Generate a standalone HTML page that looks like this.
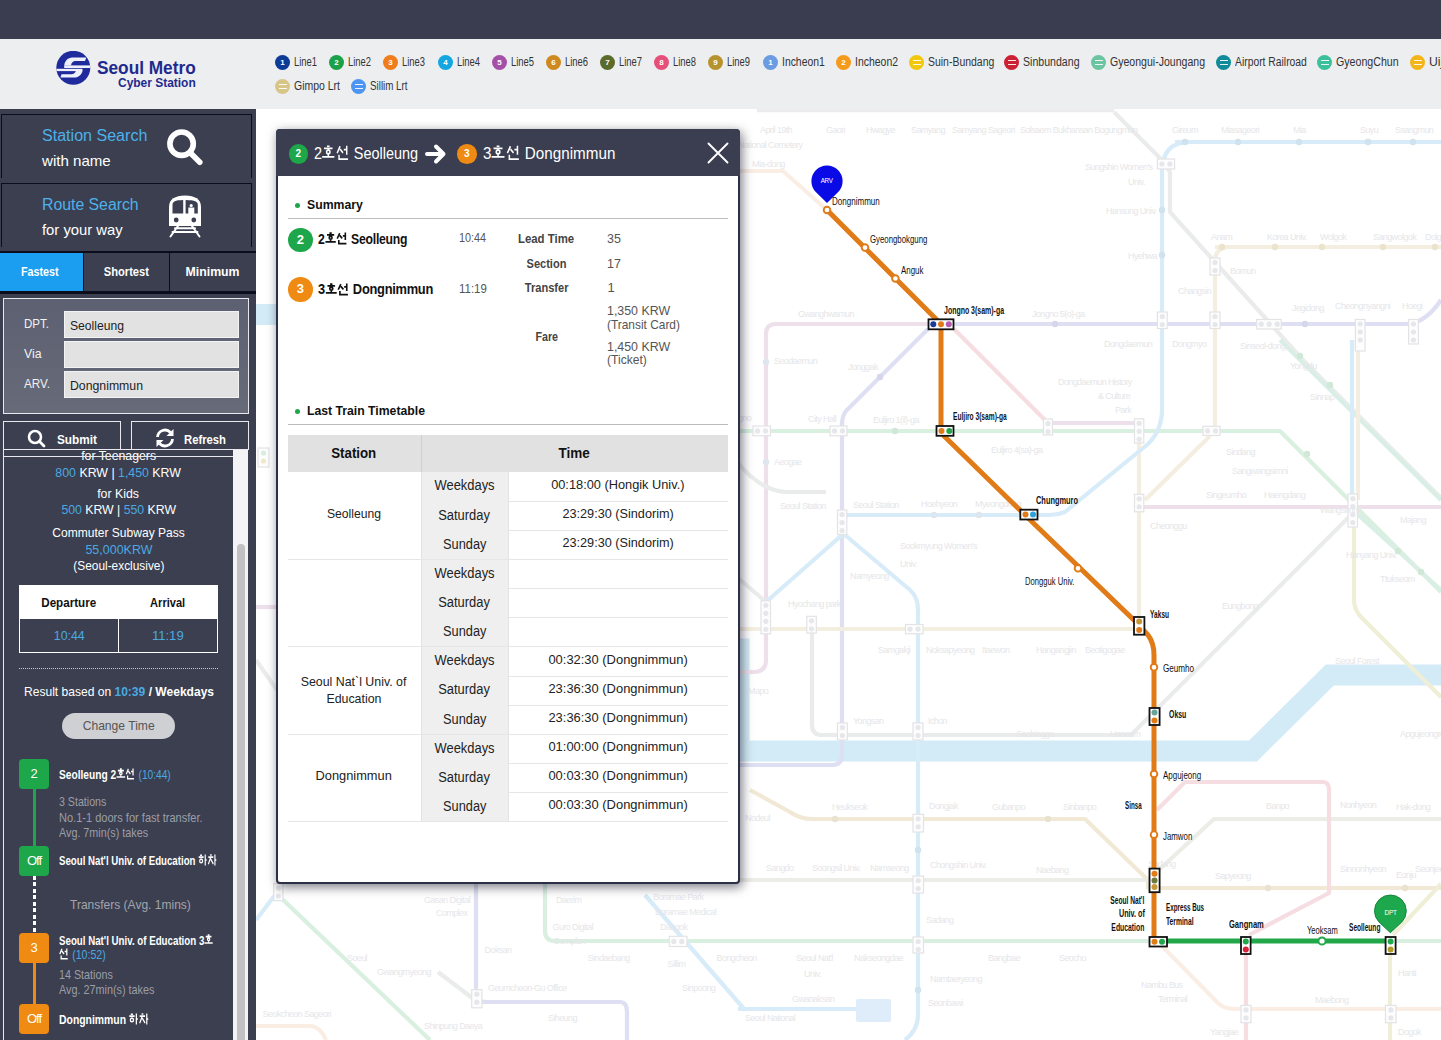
<!DOCTYPE html>
<html><head><meta charset="utf-8"><style>*{margin:0;padding:0;box-sizing:border-box}
html,body{width:1441px;height:1040px;overflow:hidden;background:#fff;font-family:"Liberation Sans",sans-serif}
.a{position:absolute}
.t{position:absolute;white-space:nowrap;line-height:1}
.kg{display:inline-block;width:0.92em;height:0.92em;vertical-align:-0.08em;margin-right:0.04em;fill:none;stroke:currentColor;overflow:visible}
.li{position:absolute;height:15px}
.li i{position:absolute;left:0;top:0;width:15px;height:15px;border-radius:50%;color:#fff;font-style:normal;font-size:8px;line-height:15px;text-align:center;font-weight:bold}
.box{position:absolute;border:1px solid #0b0d1c;border-bottom:none}
.inp{position:absolute;left:64px;width:175px;height:27px;background:#e2e2e2;border:1px solid #f4f4f4}
.bd{position:absolute;left:19px;width:30px;height:30px;border-radius:4px;color:#fff;font-size:13px;text-align:center;line-height:30px}
</style></head><body>
<div class="a" style="left:0;top:0;width:1441px;height:39px;background:#393d4f"></div><div class="a" style="left:0;top:39px;width:1441px;height:70px;background:#edeef0"></div><svg class="a" style="left:56px;top:51px" width="35" height="34" viewBox="0 0 35 34">
<defs><clipPath id="lc"><circle cx="17.3" cy="16.8" r="17"/></clipPath></defs>
<circle cx="17.3" cy="16.8" r="17" fill="#1f2b9c"/>
<g clip-path="url(#lc)" fill="#eef0fb">
<path d="M30.3,6.6L16.2,6.6C12,6.6 8.8,10.2 8.2,14.4L15,14.4C15.4,11.8 17,10 19.5,10L29,10Z"/>
<rect x="8.2" y="14.4" width="27" height="2.6"/>
<rect x="0" y="17.8" width="26.5" height="2.3"/>
<path d="M4.5,26.5L18.5,26.5C22.7,26.5 25.9,23 26.5,19.9L19.8,19.9C19.3,21.6 17.8,23.2 15.4,23.2L5.5,23.2Z"/>
</g></svg><div class="t" style="top:58.56px;font-size:18px;color:#1f2a8e;font-weight:bold;left:97.00px;transform:scaleX(0.958);transform-origin:0 0;">Seoul Metro</div>
<div class="t" style="top:76.54px;font-size:12px;color:#1f2a8e;font-weight:bold;left:117.50px;transform:scaleX(0.996);transform-origin:0 0;">Cyber Station</div>
<div class="li" style="left:275px;top:55px"><i style="background:#0e3b97">1</i></div><div class="t" style="top:56.22px;font-size:12.5px;color:#333;left:294.00px;transform:scaleX(0.752);transform-origin:0 0;">Line1</div>
<div class="li" style="left:329px;top:55px"><i style="background:#1aa14a">2</i></div><div class="t" style="top:56.22px;font-size:12.5px;color:#333;left:348.00px;transform:scaleX(0.752);transform-origin:0 0;">Line2</div>
<div class="li" style="left:383px;top:55px"><i style="background:#f07d1a">3</i></div><div class="t" style="top:56.22px;font-size:12.5px;color:#333;left:402.00px;transform:scaleX(0.752);transform-origin:0 0;">Line3</div>
<div class="li" style="left:438px;top:55px"><i style="background:#13a6e0">4</i></div><div class="t" style="top:56.22px;font-size:12.5px;color:#333;left:457.00px;transform:scaleX(0.752);transform-origin:0 0;">Line4</div>
<div class="li" style="left:492px;top:55px"><i style="background:#a550a7">5</i></div><div class="t" style="top:56.22px;font-size:12.5px;color:#333;left:511.00px;transform:scaleX(0.752);transform-origin:0 0;">Line5</div>
<div class="li" style="left:546px;top:55px"><i style="background:#cf8a1f">6</i></div><div class="t" style="top:56.22px;font-size:12.5px;color:#333;left:565.00px;transform:scaleX(0.752);transform-origin:0 0;">Line6</div>
<div class="li" style="left:600px;top:55px"><i style="background:#5b6b2c">7</i></div><div class="t" style="top:56.22px;font-size:12.5px;color:#333;left:619.00px;transform:scaleX(0.752);transform-origin:0 0;">Line7</div>
<div class="li" style="left:654px;top:55px"><i style="background:#e5507a">8</i></div><div class="t" style="top:56.22px;font-size:12.5px;color:#333;left:673.00px;transform:scaleX(0.752);transform-origin:0 0;">Line8</div>
<div class="li" style="left:708px;top:55px"><i style="background:#b6932f">9</i></div><div class="t" style="top:56.22px;font-size:12.5px;color:#333;left:727.00px;transform:scaleX(0.752);transform-origin:0 0;">Line9</div>
<div class="li" style="left:763px;top:55px"><i style="background:#6b9be0">1</i></div><div class="t" style="top:56.22px;font-size:12.5px;color:#333;left:782.00px;transform:scaleX(0.832);transform-origin:0 0;">Incheon1</div>
<div class="li" style="left:836px;top:55px"><i style="background:#f59a1b">2</i></div><div class="t" style="top:56.22px;font-size:12.5px;color:#333;left:855.00px;transform:scaleX(0.836);transform-origin:0 0;">Incheon2</div>
<div class="li" style="left:909px;top:55px"><i style="background:#f2c80f"><span style="display:inline-block;width:8px;height:5px;margin-top:5px;border-top:1.5px solid #fff;border-bottom:1.5px solid #fff;opacity:.9"></span></i></div><div class="t" style="top:56.22px;font-size:12.5px;color:#333;left:928.00px;transform:scaleX(0.837);transform-origin:0 0;">Suin-Bundang</div>
<div class="li" style="left:1004px;top:55px"><i style="background:#cc2035"><span style="display:inline-block;width:8px;height:5px;margin-top:5px;border-top:1.5px solid #fff;border-bottom:1.5px solid #fff;opacity:.9"></span></i></div><div class="t" style="top:56.22px;font-size:12.5px;color:#333;left:1023.00px;transform:scaleX(0.847);transform-origin:0 0;">Sinbundang</div>
<div class="li" style="left:1091px;top:55px"><i style="background:#6cc4a0"><span style="display:inline-block;width:8px;height:5px;margin-top:5px;border-top:1.5px solid #fff;border-bottom:1.5px solid #fff;opacity:.9"></span></i></div><div class="t" style="top:56.22px;font-size:12.5px;color:#333;left:1110.00px;transform:scaleX(0.844);transform-origin:0 0;">Gyeongui-Joungang</div>
<div class="li" style="left:1216px;top:55px"><i style="background:#118a9a"><span style="display:inline-block;width:8px;height:5px;margin-top:5px;border-top:1.5px solid #fff;border-bottom:1.5px solid #fff;opacity:.9"></span></i></div><div class="t" style="top:56.22px;font-size:12.5px;color:#333;left:1235.00px;transform:scaleX(0.827);transform-origin:0 0;">Airport Railroad</div>
<div class="li" style="left:1317px;top:55px"><i style="background:#3cc09c"><span style="display:inline-block;width:8px;height:5px;margin-top:5px;border-top:1.5px solid #fff;border-bottom:1.5px solid #fff;opacity:.9"></span></i></div><div class="t" style="top:56.22px;font-size:12.5px;color:#333;left:1336.00px;transform:scaleX(0.851);transform-origin:0 0;">GyeongChun</div>
<div class="li" style="left:1410px;top:55px"><i style="background:#f2b51c"><span style="display:inline-block;width:8px;height:5px;margin-top:5px;border-top:1.5px solid #fff;border-bottom:1.5px solid #fff;opacity:.9"></span></i></div><div class="t" style="top:56.22px;font-size:12.5px;color:#333;left:1429.00px;transform:scaleX(0.977);transform-origin:0 0;">Uijeongbu</div>
<div class="li" style="left:275px;top:79px"><i style="background:#d8c588"><span style="display:inline-block;width:8px;height:5px;margin-top:5px;border-top:1.5px solid #fff;border-bottom:1.5px solid #fff;opacity:.9"></span></i></div><div class="t" style="top:80.22px;font-size:12.5px;color:#333;left:294.00px;transform:scaleX(0.838);transform-origin:0 0;">Gimpo Lrt</div>
<div class="li" style="left:351px;top:79px"><i style="background:#4d95f0"><span style="display:inline-block;width:8px;height:5px;margin-top:5px;border-top:1.5px solid #fff;border-bottom:1.5px solid #fff;opacity:.9"></span></i></div><div class="t" style="top:80.22px;font-size:12.5px;color:#333;left:370.00px;transform:scaleX(0.783);transform-origin:0 0;">Sillim Lrt</div>
<div class="a" style="left:256px;top:109px;width:1185px;height:931px;background:#fff"></div><svg class="a" style="left:256px;top:109px" width="1185" height="931" viewBox="256 109 1185 931"><path d="M757,110.5H1114" stroke="#ececef" stroke-width="3.5" fill="none" stroke-linejoin="round"/><path d="M256,304H278V325H256Z" fill="#d3ebf6"/><path d="M739,638.5H749.6V740.6H1249L1325.8,664.4H1441V685.6H1333.8L1257,761.4H739Z" fill="#d3ebf6"/><path d="M738,171H783L827,210" stroke="#faeee4" stroke-width="4.2" fill="none" stroke-linejoin="round"/><path d="M1441,300Q1425,324 1405,324H954" stroke="#dedff2" stroke-width="4.2" fill="none" stroke-linejoin="round"/><path d="M928,324H776Q766,324 766,334V660Q766,672 754,672H739" stroke="#eee0ea" stroke-width="4.2" fill="none" stroke-linejoin="round"/><path d="M928,329L846,411Q842,416 842,425V755Q842,765 832,765H739" stroke="#dedff2" stroke-width="4.2" fill="none" stroke-linejoin="round"/><path d="M954,329L1045,420" stroke="#f5dde1" stroke-width="4.2" fill="none" stroke-linejoin="round"/><path d="M1048,423H1139" stroke="#eee0ea" stroke-width="4.2" fill="none" stroke-linejoin="round"/><path d="M1139,443V625" stroke="#f4eee0" stroke-width="4.2" fill="none" stroke-linejoin="round"/><path d="M1139,507H1441" stroke="#eee0ea" stroke-width="4.2" fill="none" stroke-linejoin="round"/><path d="M738,431H1280L1352,503L1441,592" stroke="#d9f0e1" stroke-width="4.2" fill="none" stroke-linejoin="round"/><path d="M1175,142H1441" stroke="#d7ecf8" stroke-width="4.2" fill="none" stroke-linejoin="round"/><path d="M1162,410V172Q1162,142 1190,142" stroke="#d7ecf8" stroke-width="4.2" fill="none" stroke-linejoin="round"/><path d="M1162,410Q1162,430 1148,444L1065,512Q1058,515 1050,515H842" stroke="#d7ecf8" stroke-width="4.2" fill="none" stroke-linejoin="round"/><path d="M845,535L910,590Q918,597 918,610V1015Q918,1030 905,1040" stroke="#d7ecf8" stroke-width="4.2" fill="none" stroke-linejoin="round"/><path d="M1215,247H1441" stroke="#f4eee0" stroke-width="4.2" fill="none" stroke-linejoin="round"/><path d="M1215,436V262Q1215,247 1230,247" stroke="#f4eee0" stroke-width="4.2" fill="none" stroke-linejoin="round"/><path d="M1210,436L1145,500" stroke="#f4eee0" stroke-width="4.2" fill="none" stroke-linejoin="round"/><path d="M738,629H1137" stroke="#f4eee0" stroke-width="4.2" fill="none" stroke-linejoin="round"/><path d="M1114,112L1162,160L1170,172V212L1303,360L1441,498" stroke="#eaeceb" stroke-width="4.2" fill="none" stroke-linejoin="round"/><path d="M812,620V725Q812,735 822,735H1131L1352,514" stroke="#eaeceb" stroke-width="4.2" fill="none" stroke-linejoin="round"/><path d="M1280,340L1441,500" stroke="#d9efe6" stroke-width="4.2" fill="none" stroke-linejoin="round"/><path d="M738,463Q762,492 788,492H826" stroke="#eaeceb" stroke-width="4.2" fill="none" stroke-linejoin="round"/><path d="M842,535L766,602" stroke="#d7ecf8" stroke-width="4.2" fill="none" stroke-linejoin="round"/><path d="M766,602L738,578" stroke="#eaeceb" stroke-width="4.2" fill="none" stroke-linejoin="round"/><path d="M1355,512L1441,590" stroke="#d9efe6" stroke-width="4.2" fill="none" stroke-linejoin="round"/><path d="M1352,340V500" stroke="#d7ecf8" stroke-width="4.2" fill="none" stroke-linejoin="round"/><path d="M1358,340V500" stroke="#f4eee0" stroke-width="4.2" fill="none" stroke-linejoin="round"/><path d="M1354,500V600Q1354,610 1362,618L1441,697" stroke="#efeed6" stroke-width="4.2" fill="none" stroke-linejoin="round"/><path d="M750,790L790,812Q800,819 812,819H1085L1148,880V888H1441" stroke="#f1e9d5" stroke-width="4.2" fill="none" stroke-linejoin="round"/><path d="M738,880H1148L1214,819H1441" stroke="#ecede6" stroke-width="4.2" fill="none" stroke-linejoin="round"/><path d="M738,941H1158" stroke="#d9f0e1" stroke-width="4.2" fill="none" stroke-linejoin="round"/><path d="M1395,941H1441" stroke="#d9f0e1" stroke-width="4.2" fill="none" stroke-linejoin="round"/><path d="M1157,810L1185,782H1323Q1329,782 1329,790V893L1249,935" stroke="#f5dde1" stroke-width="4.2" fill="none" stroke-linejoin="round"/><path d="M1246,954V1040" stroke="#f5dde1" stroke-width="4.2" fill="none" stroke-linejoin="round"/><path d="M1162,946L1215,1000Q1222,1009 1235,1009H1441" stroke="#faeee4" stroke-width="4.2" fill="none" stroke-linejoin="round"/><path d="M1390,954V1040" stroke="#efeed6" stroke-width="4.2" fill="none" stroke-linejoin="round"/><path d="M1393,935L1441,884" stroke="#efeed6" stroke-width="4.2" fill="none" stroke-linejoin="round"/><path d="M738,1009H858" stroke="#d7ecf8" stroke-width="4.2" fill="none" stroke-linejoin="round"/><rect x="856" y="999" width="35" height="23" rx="2" fill="#dfedfa"/><path d="M476,883V995Q476,1002 486,1002H620Q627,1002 627,1012V1040" stroke="#dedff2" stroke-width="4.2" fill="none" stroke-linejoin="round"/><path d="M278,895L430,1040" stroke="#d9f0e1" stroke-width="4.2" fill="none" stroke-linejoin="round"/><path d="M545,883V931Q545,941 555,941H738" stroke="#d9f0e1" stroke-width="4.2" fill="none" stroke-linejoin="round"/><path d="M645,895L745,1010" stroke="#d7ecf8" stroke-width="4.2" fill="none" stroke-linejoin="round"/><path d="M438,972L475,1000" stroke="#eaeceb" stroke-width="4.2" fill="none" stroke-linejoin="round"/><path d="M256,1026H310Q320,1026 326,1040" stroke="#faeee4" stroke-width="4.2" fill="none" stroke-linejoin="round"/><path d="M256,920L275,895" stroke="#d7ecf8" stroke-width="4.2" fill="none" stroke-linejoin="round"/><path d="M256,660L277,690" stroke="#eaeceb" stroke-width="4.2" fill="none" stroke-linejoin="round"/><path d="M256,607H277" stroke="#eee0ea" stroke-width="4.2" fill="none" stroke-linejoin="round"/><rect x="258" y="448" width="11" height="19" fill="#fdfdfd" stroke="#e3e3e6" stroke-width="1.2"/><circle cx="263.5" cy="453" r="2.6" fill="#d5eede"/><circle cx="263.5" cy="461" r="2.6" fill="#efe9c9"/><circle cx="1185" cy="142" r="3.2" fill="#cfe2ee"/><circle cx="1238" cy="142" r="3.2" fill="#cfe2ee"/><circle cx="1299" cy="142" r="3.2" fill="#cfe2ee"/><circle cx="1368" cy="142" r="3.2" fill="#cfe2ee"/><circle cx="1413" cy="142" r="3.2" fill="#cfe2ee"/><circle cx="1162" cy="210" r="3.2" fill="#cfe2ee"/><circle cx="1162" cy="255" r="3.2" fill="#cfe2ee"/><circle cx="918" cy="850" r="3.2" fill="#cfe2ee"/><circle cx="918" cy="990" r="3.2" fill="#cfe2ee"/><circle cx="1222" cy="247" r="3.2" fill="#ece3cd"/><circle cx="1275" cy="247" r="3.2" fill="#ece3cd"/><circle cx="1322" cy="247" r="3.2" fill="#ece3cd"/><circle cx="1383" cy="247" r="3.2" fill="#ece3cd"/><circle cx="1435" cy="247" r="3.2" fill="#ece3cd"/><circle cx="1055" cy="324" r="3.2" fill="#d6d6ea"/><circle cx="1305" cy="324" r="3.2" fill="#d6d6ea"/><circle cx="880" cy="377" r="3.2" fill="#d6d6ea"/><circle cx="895" cy="431" r="3.2" fill="#cfe8d8"/><circle cx="1300" cy="356" r="3.2" fill="#cfe8d8"/><circle cx="1330" cy="385" r="3.2" fill="#cfe8d8"/><circle cx="1307" cy="454" r="3.2" fill="#cfe8d8"/><circle cx="1398" cy="551" r="3.2" fill="#cfe8d8"/><circle cx="1421" cy="572" r="3.2" fill="#cfe8d8"/><circle cx="934" cy="515" r="3.2" fill="#dde6ee"/><circle cx="979" cy="515" r="3.2" fill="#dde6ee"/><circle cx="766" cy="362" r="3.2" fill="#dde6ee"/><circle cx="766" cy="462" r="3.2" fill="#dde6ee"/><circle cx="1268" cy="888" r="3.2" fill="#e8e2cf"/><circle cx="1405" cy="888" r="3.2" fill="#e8e2cf"/><circle cx="835" cy="819" r="3.2" fill="#e8e2cf"/><circle cx="1048" cy="819" r="3.2" fill="#e8e2cf"/><rect x="753" y="426" width="17.5" height="9.8" fill="#fdfdfd" stroke="#e3e3e6" stroke-width="1.2"/><circle cx="757.5" cy="430.9" r="2.6" fill="#e6e7ea"/><circle cx="765.5" cy="430.9" r="2.6" fill="#e6e7ea"/><rect x="830" y="426" width="17.0" height="9.8" fill="#fdfdfd" stroke="#e3e3e6" stroke-width="1.2"/><circle cx="834.5" cy="430.9" r="2.6" fill="#e6e7ea"/><circle cx="842.5" cy="430.9" r="2.6" fill="#e6e7ea"/><rect x="1043.5" y="419" width="9.0" height="16.0" fill="#fdfdfd" stroke="#e3e3e6" stroke-width="1.2"/><circle cx="1048.0" cy="423.5" r="2.6" fill="#e6e7ea"/><circle cx="1048.0" cy="431.5" r="2.6" fill="#e6e7ea"/><rect x="837.5" y="510" width="9.3" height="24.5" fill="#fdfdfd" stroke="#e3e3e6" stroke-width="1.2"/><circle cx="842.1" cy="514.5" r="2.6" fill="#e6e7ea"/><circle cx="842.1" cy="522.5" r="2.6" fill="#e6e7ea"/><circle cx="842.1" cy="530.5" r="2.6" fill="#e6e7ea"/><rect x="1157.4" y="312" width="9.8" height="16.5" fill="#fdfdfd" stroke="#e3e3e6" stroke-width="1.2"/><circle cx="1162.3" cy="316.5" r="2.6" fill="#e6e7ea"/><circle cx="1162.3" cy="324.5" r="2.6" fill="#e6e7ea"/><rect x="1210" y="312" width="10.0" height="16.5" fill="#fdfdfd" stroke="#e3e3e6" stroke-width="1.2"/><circle cx="1215.0" cy="316.5" r="2.6" fill="#e6e7ea"/><circle cx="1215.0" cy="324.5" r="2.6" fill="#e6e7ea"/><rect x="1256.7" y="319.5" width="24.5" height="9.5" fill="#fdfdfd" stroke="#e3e3e6" stroke-width="1.2"/><circle cx="1261.2" cy="324.2" r="2.6" fill="#e6e7ea"/><circle cx="1269.2" cy="324.2" r="2.6" fill="#e6e7ea"/><circle cx="1277.2" cy="324.2" r="2.6" fill="#e6e7ea"/><rect x="1355.4" y="319.5" width="9.6" height="31.5" fill="#fdfdfd" stroke="#e3e3e6" stroke-width="1.2"/><circle cx="1360.2" cy="324.0" r="2.6" fill="#e6e7ea"/><circle cx="1360.2" cy="332.0" r="2.6" fill="#e6e7ea"/><circle cx="1360.2" cy="340.0" r="2.6" fill="#e6e7ea"/><rect x="1408.6" y="319.5" width="9.8" height="24.5" fill="#fdfdfd" stroke="#e3e3e6" stroke-width="1.2"/><circle cx="1413.5" cy="324.0" r="2.6" fill="#e6e7ea"/><circle cx="1413.5" cy="332.0" r="2.6" fill="#e6e7ea"/><circle cx="1413.5" cy="340.0" r="2.6" fill="#e6e7ea"/><rect x="1157.4" y="159" width="17.2" height="10.0" fill="#fdfdfd" stroke="#e3e3e6" stroke-width="1.2"/><circle cx="1161.9" cy="164.0" r="2.6" fill="#e6e7ea"/><circle cx="1169.9" cy="164.0" r="2.6" fill="#e6e7ea"/><rect x="1210" y="258" width="10.0" height="17.0" fill="#fdfdfd" stroke="#e3e3e6" stroke-width="1.2"/><circle cx="1215.0" cy="262.5" r="2.6" fill="#e6e7ea"/><circle cx="1215.0" cy="270.5" r="2.6" fill="#e6e7ea"/><rect x="1134.5" y="418.8" width="9.3" height="24.2" fill="#fdfdfd" stroke="#e3e3e6" stroke-width="1.2"/><circle cx="1139.2" cy="423.3" r="2.6" fill="#e6e7ea"/><circle cx="1139.2" cy="431.3" r="2.6" fill="#e6e7ea"/><circle cx="1139.2" cy="439.3" r="2.6" fill="#e6e7ea"/><rect x="1203" y="426.3" width="17.0" height="9.2" fill="#fdfdfd" stroke="#e3e3e6" stroke-width="1.2"/><circle cx="1207.5" cy="430.9" r="2.6" fill="#e6e7ea"/><circle cx="1215.5" cy="430.9" r="2.6" fill="#e6e7ea"/><rect x="1134.5" y="494.3" width="9.3" height="17.5" fill="#fdfdfd" stroke="#e3e3e6" stroke-width="1.2"/><circle cx="1139.2" cy="498.8" r="2.6" fill="#e6e7ea"/><circle cx="1139.2" cy="506.8" r="2.6" fill="#e6e7ea"/><rect x="1348" y="494" width="9.5" height="33.0" fill="#fdfdfd" stroke="#e3e3e6" stroke-width="1.2"/><circle cx="1352.8" cy="498.5" r="2.6" fill="#e6e7ea"/><circle cx="1352.8" cy="506.5" r="2.6" fill="#e6e7ea"/><circle cx="1352.8" cy="514.5" r="2.6" fill="#e6e7ea"/><circle cx="1352.8" cy="522.5" r="2.6" fill="#e6e7ea"/><rect x="761" y="600.8" width="9.5" height="33.0" fill="#fdfdfd" stroke="#e3e3e6" stroke-width="1.2"/><circle cx="765.8" cy="605.3" r="2.6" fill="#e6e7ea"/><circle cx="765.8" cy="613.3" r="2.6" fill="#e6e7ea"/><circle cx="765.8" cy="621.3" r="2.6" fill="#e6e7ea"/><circle cx="765.8" cy="629.3" r="2.6" fill="#e6e7ea"/><rect x="806.8" y="616.3" width="9.5" height="16.7" fill="#fdfdfd" stroke="#e3e3e6" stroke-width="1.2"/><circle cx="811.5" cy="620.8" r="2.6" fill="#e6e7ea"/><circle cx="811.5" cy="628.8" r="2.6" fill="#e6e7ea"/><rect x="905.5" y="624.5" width="17.5" height="9.3" fill="#fdfdfd" stroke="#e3e3e6" stroke-width="1.2"/><circle cx="910.0" cy="629.1" r="2.6" fill="#e6e7ea"/><circle cx="918.0" cy="629.1" r="2.6" fill="#e6e7ea"/><rect x="837.5" y="723" width="9.8" height="17.0" fill="#fdfdfd" stroke="#e3e3e6" stroke-width="1.2"/><circle cx="842.4" cy="727.5" r="2.6" fill="#e6e7ea"/><circle cx="842.4" cy="735.5" r="2.6" fill="#e6e7ea"/><rect x="913" y="723" width="10.0" height="17.0" fill="#fdfdfd" stroke="#e3e3e6" stroke-width="1.2"/><circle cx="918.0" cy="727.5" r="2.6" fill="#e6e7ea"/><circle cx="918.0" cy="735.5" r="2.6" fill="#e6e7ea"/><rect x="913" y="814.3" width="10.5" height="17.7" fill="#fdfdfd" stroke="#e3e3e6" stroke-width="1.2"/><circle cx="918.2" cy="818.8" r="2.6" fill="#e6e7ea"/><circle cx="918.2" cy="826.8" r="2.6" fill="#e6e7ea"/><rect x="913" y="876" width="10.5" height="17.0" fill="#fdfdfd" stroke="#e3e3e6" stroke-width="1.2"/><circle cx="918.2" cy="880.5" r="2.6" fill="#e6e7ea"/><circle cx="918.2" cy="888.5" r="2.6" fill="#e6e7ea"/><rect x="913" y="937" width="10.5" height="16.0" fill="#fdfdfd" stroke="#e3e3e6" stroke-width="1.2"/><circle cx="918.2" cy="941.5" r="2.6" fill="#e6e7ea"/><circle cx="918.2" cy="949.5" r="2.6" fill="#e6e7ea"/><rect x="1241" y="1005.4" width="10.0" height="17.3" fill="#fdfdfd" stroke="#e3e3e6" stroke-width="1.2"/><circle cx="1246.0" cy="1009.9" r="2.6" fill="#e6e7ea"/><circle cx="1246.0" cy="1017.9" r="2.6" fill="#e6e7ea"/><rect x="1385.5" y="1005.4" width="10.5" height="17.3" fill="#fdfdfd" stroke="#e3e3e6" stroke-width="1.2"/><circle cx="1390.8" cy="1009.9" r="2.6" fill="#e6e7ea"/><circle cx="1390.8" cy="1017.9" r="2.6" fill="#e6e7ea"/><rect x="273.7" y="883.6" width="9.2" height="17.0" fill="#fdfdfd" stroke="#e3e3e6" stroke-width="1.2"/><circle cx="278.3" cy="888.1" r="2.6" fill="#e6e7ea"/><circle cx="278.3" cy="896.1" r="2.6" fill="#e6e7ea"/><rect x="471.7" y="989.7" width="10.2" height="18.1" fill="#fdfdfd" stroke="#e3e3e6" stroke-width="1.2"/><circle cx="476.8" cy="994.2" r="2.6" fill="#e6e7ea"/><circle cx="476.8" cy="1002.2" r="2.6" fill="#e6e7ea"/><rect x="669.3" y="936.3" width="17.7" height="10.2" fill="#fdfdfd" stroke="#e3e3e6" stroke-width="1.2"/><circle cx="673.8" cy="941.4" r="2.6" fill="#e6e7ea"/><circle cx="681.8" cy="941.4" r="2.6" fill="#e6e7ea"/></svg><div class="t" style="top:126.38px;font-size:9px;color:#e6e6e9;letter-spacing:-0.6px;left:760.00px;">April 19th</div>
<div class="t" style="top:141.38px;font-size:9px;color:#e6e6e9;letter-spacing:-0.6px;left:738.00px;">National Cemetery</div>
<div class="t" style="top:126.38px;font-size:9px;color:#e6e6e9;letter-spacing:-0.6px;left:826.00px;">Gaori</div>
<div class="t" style="top:126.38px;font-size:9px;color:#e6e6e9;letter-spacing:-0.6px;left:866.00px;">Hwagye</div>
<div class="t" style="top:126.38px;font-size:9px;color:#e6e6e9;letter-spacing:-0.6px;left:911.00px;">Samyang</div>
<div class="t" style="top:126.38px;font-size:9px;color:#e6e6e9;letter-spacing:-0.6px;left:952.00px;">Samyang Sageori</div>
<div class="t" style="top:126.38px;font-size:9px;color:#e6e6e9;letter-spacing:-0.6px;left:1020.00px;">Solsaem Bukhansan Bogungmun</div>
<div class="t" style="top:160.38px;font-size:9px;color:#e6e6e9;letter-spacing:-0.6px;left:752.00px;">Mia-dong</div>
<div class="t" style="top:126.38px;font-size:9px;color:#e6e6e9;letter-spacing:-0.6px;left:1172.00px;">Gireum</div>
<div class="t" style="top:126.38px;font-size:9px;color:#e6e6e9;letter-spacing:-0.6px;left:1221.00px;">Miasageori</div>
<div class="t" style="top:126.38px;font-size:9px;color:#e6e6e9;letter-spacing:-0.6px;left:1293.00px;">Mia</div>
<div class="t" style="top:126.38px;font-size:9px;color:#e6e6e9;letter-spacing:-0.6px;left:1360.00px;">Suyu</div>
<div class="t" style="top:126.38px;font-size:9px;color:#e6e6e9;letter-spacing:-0.6px;left:1395.00px;">Ssangmun</div>
<div class="t" style="top:163.38px;font-size:9px;color:#e6e6e9;letter-spacing:-0.6px;left:1085.00px;">Sungshin Women's</div>
<div class="t" style="top:178.38px;font-size:9px;color:#e6e6e9;letter-spacing:-0.6px;left:1128.00px;">Univ.</div>
<div class="t" style="top:207.38px;font-size:9px;color:#e6e6e9;letter-spacing:-0.6px;left:1106.00px;">Hansung Univ.</div>
<div class="t" style="top:252.38px;font-size:9px;color:#e6e6e9;letter-spacing:-0.6px;left:1128.00px;">Hyehwa</div>
<div class="t" style="top:233.38px;font-size:9px;color:#e6e6e9;letter-spacing:-0.6px;left:1211.00px;">Anam</div>
<div class="t" style="top:233.38px;font-size:9px;color:#e6e6e9;letter-spacing:-0.6px;left:1267.00px;">Korea Univ.</div>
<div class="t" style="top:233.38px;font-size:9px;color:#e6e6e9;letter-spacing:-0.6px;left:1320.00px;">Wolgok</div>
<div class="t" style="top:233.38px;font-size:9px;color:#e6e6e9;letter-spacing:-0.6px;left:1373.00px;">Sangwolgok</div>
<div class="t" style="top:233.38px;font-size:9px;color:#e6e6e9;letter-spacing:-0.6px;left:1425.00px;">Dolgoji</div>
<div class="t" style="top:267.38px;font-size:9px;color:#e6e6e9;letter-spacing:-0.6px;left:1230.00px;">Bomun</div>
<div class="t" style="top:287.38px;font-size:9px;color:#e6e6e9;letter-spacing:-0.6px;left:1178.00px;">Changsin</div>
<div class="t" style="top:304.38px;font-size:9px;color:#e6e6e9;letter-spacing:-0.6px;left:1292.00px;">Jegidong</div>
<div class="t" style="top:302.38px;font-size:9px;color:#e6e6e9;letter-spacing:-0.6px;left:1335.00px;">Cheongnyangni</div>
<div class="t" style="top:302.38px;font-size:9px;color:#e6e6e9;letter-spacing:-0.6px;left:1402.00px;">Hoegi</div>
<div class="t" style="top:310.38px;font-size:9px;color:#e6e6e9;letter-spacing:-0.6px;left:798.00px;">Gwanghwamun</div>
<div class="t" style="top:310.38px;font-size:9px;color:#e6e6e9;letter-spacing:-0.6px;left:1032.00px;">Jongno 5(o)-ga</div>
<div class="t" style="top:357.38px;font-size:9px;color:#e6e6e9;letter-spacing:-0.6px;left:774.00px;">Seodaemun</div>
<div class="t" style="top:363.38px;font-size:9px;color:#e6e6e9;letter-spacing:-0.6px;left:848.00px;">Jonggak</div>
<div class="t" style="top:340.38px;font-size:9px;color:#e6e6e9;letter-spacing:-0.6px;left:1104.00px;">Dongdaemun</div>
<div class="t" style="top:340.38px;font-size:9px;color:#e6e6e9;letter-spacing:-0.6px;left:1172.00px;">Dongmyo</div>
<div class="t" style="top:342.38px;font-size:9px;color:#e6e6e9;letter-spacing:-0.6px;left:1240.00px;">Sinseol-dong</div>
<div class="t" style="top:362.38px;font-size:9px;color:#e6e6e9;letter-spacing:-0.6px;left:1290.00px;">Yongdu</div>
<div class="t" style="top:393.38px;font-size:9px;color:#e6e6e9;letter-spacing:-0.6px;left:1310.00px;">Sinnap</div>
<div class="t" style="top:378.38px;font-size:9px;color:#e6e6e9;letter-spacing:-0.6px;left:1058.00px;">Dongdaemun History</div>
<div class="t" style="top:392.38px;font-size:9px;color:#e6e6e9;letter-spacing:-0.6px;left:1098.00px;">& Culture</div>
<div class="t" style="top:406.38px;font-size:9px;color:#e6e6e9;letter-spacing:-0.6px;left:1115.00px;">Park</div>
<div class="t" style="top:414.38px;font-size:9px;color:#e6e6e9;letter-spacing:-0.6px;left:738.00px;">gno</div>
<div class="t" style="top:415.38px;font-size:9px;color:#e6e6e9;letter-spacing:-0.6px;left:808.00px;">City Hall</div>
<div class="t" style="top:416.38px;font-size:9px;color:#e6e6e9;letter-spacing:-0.6px;left:873.00px;">Euljiro 1(il)-ga</div>
<div class="t" style="top:446.38px;font-size:9px;color:#e6e6e9;letter-spacing:-0.6px;left:991.00px;">Euljiro 4(sa)-ga</div>
<div class="t" style="top:448.38px;font-size:9px;color:#e6e6e9;letter-spacing:-0.6px;left:1226.00px;">Sindang</div>
<div class="t" style="top:467.38px;font-size:9px;color:#e6e6e9;letter-spacing:-0.6px;left:1232.00px;">Sangwangsimni</div>
<div class="t" style="top:458.38px;font-size:9px;color:#e6e6e9;letter-spacing:-0.6px;left:774.00px;">Aeogae</div>
<div class="t" style="top:502.38px;font-size:9px;color:#e6e6e9;letter-spacing:-0.6px;left:780.00px;">Seoul Station</div>
<div class="t" style="top:501.38px;font-size:9px;color:#e6e6e9;letter-spacing:-0.6px;left:853.00px;">Seoul Station</div>
<div class="t" style="top:500.38px;font-size:9px;color:#e6e6e9;letter-spacing:-0.6px;left:921.00px;">Hoehyeon</div>
<div class="t" style="top:500.38px;font-size:9px;color:#e6e6e9;letter-spacing:-0.6px;left:975.00px;">Myeongdong</div>
<div class="t" style="top:491.38px;font-size:9px;color:#e6e6e9;letter-spacing:-0.6px;left:1206.00px;">Singeumho</div>
<div class="t" style="top:491.38px;font-size:9px;color:#e6e6e9;letter-spacing:-0.6px;left:1264.00px;">Haengdang</div>
<div class="t" style="top:522.38px;font-size:9px;color:#e6e6e9;letter-spacing:-0.6px;left:1150.00px;">Cheonggu</div>
<div class="t" style="top:506.38px;font-size:9px;color:#e6e6e9;letter-spacing:-0.6px;left:1320.00px;">Wangsimni</div>
<div class="t" style="top:516.38px;font-size:9px;color:#e6e6e9;letter-spacing:-0.6px;left:1400.00px;">Majang</div>
<div class="t" style="top:542.38px;font-size:9px;color:#e6e6e9;letter-spacing:-0.6px;left:900.00px;">Sookmyung Women's</div>
<div class="t" style="top:560.38px;font-size:9px;color:#e6e6e9;letter-spacing:-0.6px;left:900.00px;">Univ.</div>
<div class="t" style="top:551.38px;font-size:9px;color:#e6e6e9;letter-spacing:-0.6px;left:1346.00px;">Hanyang Univ.</div>
<div class="t" style="top:575.38px;font-size:9px;color:#e6e6e9;letter-spacing:-0.6px;left:1380.00px;">Ttukseom</div>
<div class="t" style="top:572.38px;font-size:9px;color:#e6e6e9;letter-spacing:-0.6px;left:850.00px;">Namyeong</div>
<div class="t" style="top:600.38px;font-size:9px;color:#e6e6e9;letter-spacing:-0.6px;left:788.00px;">Hyochang park</div>
<div class="t" style="top:646.38px;font-size:9px;color:#e6e6e9;letter-spacing:-0.6px;left:878.00px;">Samgakji</div>
<div class="t" style="top:646.38px;font-size:9px;color:#e6e6e9;letter-spacing:-0.6px;left:926.00px;">Noksapyeong</div>
<div class="t" style="top:646.38px;font-size:9px;color:#e6e6e9;letter-spacing:-0.6px;left:982.00px;">Itaewon</div>
<div class="t" style="top:646.38px;font-size:9px;color:#e6e6e9;letter-spacing:-0.6px;left:1036.00px;">Hangangjin</div>
<div class="t" style="top:646.38px;font-size:9px;color:#e6e6e9;letter-spacing:-0.6px;left:1085.00px;">Beotigogae</div>
<div class="t" style="top:602.38px;font-size:9px;color:#e6e6e9;letter-spacing:-0.6px;left:1222.00px;">Eungbong</div>
<div class="t" style="top:657.38px;font-size:9px;color:#e6e6e9;letter-spacing:-0.6px;left:1335.00px;">Seoul Forest</div>
<div class="t" style="top:687.38px;font-size:9px;color:#e6e6e9;letter-spacing:-0.6px;left:748.00px;">Mapo</div>
<div class="t" style="top:717.38px;font-size:9px;color:#e6e6e9;letter-spacing:-0.6px;left:853.00px;">Yongsan</div>
<div class="t" style="top:717.38px;font-size:9px;color:#e6e6e9;letter-spacing:-0.6px;left:928.00px;">Ichon</div>
<div class="t" style="top:730.38px;font-size:9px;color:#e6e6e9;letter-spacing:-0.6px;left:1016.00px;">Seobinggo</div>
<div class="t" style="top:730.38px;font-size:9px;color:#e6e6e9;letter-spacing:-0.6px;left:1110.00px;">Hannam</div>
<div class="t" style="top:730.38px;font-size:9px;color:#e6e6e9;letter-spacing:-0.6px;left:1400.00px;">Apgujeongrodeo</div>
<div class="t" style="top:814.38px;font-size:9px;color:#e6e6e9;letter-spacing:-0.6px;left:745.00px;">Nodeul</div>
<div class="t" style="top:803.38px;font-size:9px;color:#e6e6e9;letter-spacing:-0.6px;left:832.00px;">Heukseok</div>
<div class="t" style="top:802.38px;font-size:9px;color:#e6e6e9;letter-spacing:-0.6px;left:929.00px;">Dongjak</div>
<div class="t" style="top:803.38px;font-size:9px;color:#e6e6e9;letter-spacing:-0.6px;left:992.00px;">Gubanpo</div>
<div class="t" style="top:803.38px;font-size:9px;color:#e6e6e9;letter-spacing:-0.6px;left:1063.00px;">Sinbanpo</div>
<div class="t" style="top:802.38px;font-size:9px;color:#e6e6e9;letter-spacing:-0.6px;left:1266.00px;">Banpo</div>
<div class="t" style="top:801.38px;font-size:9px;color:#e6e6e9;letter-spacing:-0.6px;left:1340.00px;">Nonhyeon</div>
<div class="t" style="top:803.38px;font-size:9px;color:#e6e6e9;letter-spacing:-0.6px;left:1396.00px;">Hak-dong</div>
<div class="t" style="top:866.38px;font-size:9px;color:#e6e6e9;letter-spacing:-0.6px;left:1036.00px;">Naebang</div>
<div class="t" style="top:872.38px;font-size:9px;color:#e6e6e9;letter-spacing:-0.6px;left:1215.00px;">Sapyeong</div>
<div class="t" style="top:865.38px;font-size:9px;color:#e6e6e9;letter-spacing:-0.6px;left:1340.00px;">Sinnonhyeon</div>
<div class="t" style="top:871.38px;font-size:9px;color:#e6e6e9;letter-spacing:-0.6px;left:1396.00px;">Eonju</div>
<div class="t" style="top:865.38px;font-size:9px;color:#e6e6e9;letter-spacing:-0.6px;left:1415.00px;">Seonjeongneung</div>
<div class="t" style="top:864.38px;font-size:9px;color:#e6e6e9;letter-spacing:-0.6px;left:766.00px;">Sangdo</div>
<div class="t" style="top:864.38px;font-size:9px;color:#e6e6e9;letter-spacing:-0.6px;left:812.00px;">Soongsil Univ.</div>
<div class="t" style="top:864.38px;font-size:9px;color:#e6e6e9;letter-spacing:-0.6px;left:870.00px;">Namseong</div>
<div class="t" style="top:861.38px;font-size:9px;color:#e6e6e9;letter-spacing:-0.6px;left:930.00px;">Chongshin Univ.</div>
<div class="t" style="top:860.38px;font-size:9px;color:#e6e6e9;letter-spacing:-0.6px;left:1148.00px;">Sadang</div>
<div class="t" style="top:954.38px;font-size:9px;color:#e6e6e9;letter-spacing:-0.6px;left:988.00px;">Bangbae</div>
<div class="t" style="top:954.38px;font-size:9px;color:#e6e6e9;letter-spacing:-0.6px;left:1059.00px;">Seocho</div>
<div class="t" style="top:969.38px;font-size:9px;color:#e6e6e9;letter-spacing:-0.6px;left:1398.00px;">Hanti</div>
<div class="t" style="top:981.38px;font-size:9px;color:#e6e6e9;letter-spacing:-0.6px;left:1141.00px;">Nambu Bus</div>
<div class="t" style="top:995.38px;font-size:9px;color:#e6e6e9;letter-spacing:-0.6px;left:1158.00px;">Terminal</div>
<div class="t" style="top:996.38px;font-size:9px;color:#e6e6e9;letter-spacing:-0.6px;left:1315.00px;">Maebong</div>
<div class="t" style="top:1028.38px;font-size:9px;color:#e6e6e9;letter-spacing:-0.6px;left:1210.00px;">Yangjae</div>
<div class="t" style="top:1028.38px;font-size:9px;color:#e6e6e9;letter-spacing:-0.6px;left:1398.00px;">Dogok</div>
<div class="t" style="top:954.38px;font-size:9px;color:#e6e6e9;letter-spacing:-0.6px;left:796.00px;">Seoul Nat'l</div>
<div class="t" style="top:970.38px;font-size:9px;color:#e6e6e9;letter-spacing:-0.6px;left:804.00px;">Univ.</div>
<div class="t" style="top:954.38px;font-size:9px;color:#e6e6e9;letter-spacing:-0.6px;left:854.00px;">Nakseongdae</div>
<div class="t" style="top:916.38px;font-size:9px;color:#e6e6e9;letter-spacing:-0.6px;left:926.00px;">Sadang</div>
<div class="t" style="top:975.38px;font-size:9px;color:#e6e6e9;letter-spacing:-0.6px;left:930.00px;">Namtaeryeong</div>
<div class="t" style="top:999.38px;font-size:9px;color:#e6e6e9;letter-spacing:-0.6px;left:928.00px;">Seonbawi</div>
<div class="t" style="top:995.38px;font-size:9px;color:#e6e6e9;letter-spacing:-0.6px;left:792.00px;">Gwanaksan</div>
<div class="t" style="top:1014.38px;font-size:9px;color:#e6e6e9;letter-spacing:-0.6px;left:745.00px;">Seoul National</div>
<div class="t" style="top:896.38px;font-size:9px;color:#e6e6e9;letter-spacing:-0.6px;left:424.00px;">Gasan Digital</div>
<div class="t" style="top:909.38px;font-size:9px;color:#e6e6e9;letter-spacing:-0.6px;left:436.00px;">Complex</div>
<div class="t" style="top:896.38px;font-size:9px;color:#e6e6e9;letter-spacing:-0.6px;left:556.00px;">Daerim</div>
<div class="t" style="top:923.38px;font-size:9px;color:#e6e6e9;letter-spacing:-0.6px;left:552.60px;">Guro Digital</div>
<div class="t" style="top:937.38px;font-size:9px;color:#e6e6e9;letter-spacing:-0.6px;left:553.60px;">Complex</div>
<div class="t" style="top:946.38px;font-size:9px;color:#e6e6e9;letter-spacing:-0.6px;left:484.60px;">Doksan</div>
<div class="t" style="top:954.38px;font-size:9px;color:#e6e6e9;letter-spacing:-0.6px;left:587.70px;">Sindaebang</div>
<div class="t" style="top:960.38px;font-size:9px;color:#e6e6e9;letter-spacing:-0.6px;left:667.60px;">Sillim</div>
<div class="t" style="top:954.38px;font-size:9px;color:#e6e6e9;letter-spacing:-0.6px;left:716.60px;">Bongcheon</div>
<div class="t" style="top:893.38px;font-size:9px;color:#e6e6e9;letter-spacing:-0.6px;left:653.00px;">Boramae Park</div>
<div class="t" style="top:908.38px;font-size:9px;color:#e6e6e9;letter-spacing:-0.6px;left:655.00px;">Boramae Medical</div>
<div class="t" style="top:923.38px;font-size:9px;color:#e6e6e9;letter-spacing:-0.6px;left:660.00px;">Dangok</div>
<div class="t" style="top:984.38px;font-size:9px;color:#e6e6e9;letter-spacing:-0.6px;left:682.00px;">Sinpoong</div>
<div class="t" style="top:968.38px;font-size:9px;color:#e6e6e9;letter-spacing:-0.6px;left:377.00px;">Gwangmyeong</div>
<div class="t" style="top:984.38px;font-size:9px;color:#e6e6e9;letter-spacing:-0.6px;left:488.00px;">Geumcheon-Gu Office</div>
<div class="t" style="top:1014.38px;font-size:9px;color:#e6e6e9;letter-spacing:-0.6px;left:548.00px;">Siheung</div>
<div class="t" style="top:954.38px;font-size:9px;color:#e6e6e9;letter-spacing:-0.6px;left:347.00px;">Soeul</div>
<div class="t" style="top:1010.38px;font-size:9px;color:#e6e6e9;letter-spacing:-0.6px;left:262.50px;">Seokcheon Sageori</div>
<div class="t" style="top:1022.38px;font-size:9px;color:#e6e6e9;letter-spacing:-0.6px;left:424.00px;">Shinpung Daeya</div>
<svg class="a" style="left:256px;top:109px" width="1185" height="931" viewBox="256 109 1185 931"><path d="M827,210L941,324V431L944,436L1025,515L1139,625L1148,635Q1154,643 1154,655V941" stroke="#e07b18" stroke-width="5" fill="none"/><path d="M1158,941H1390" stroke="#22a84a" stroke-width="5" fill="none"/><circle cx="827" cy="210" r="3.3" fill="#fff" stroke="#e07b18" stroke-width="1.9"/><circle cx="865" cy="247.6" r="3.3" fill="#fff" stroke="#e07b18" stroke-width="1.9"/><circle cx="895.4" cy="278.5" r="3.3" fill="#fff" stroke="#e07b18" stroke-width="1.9"/><circle cx="1078" cy="568.3" r="3.3" fill="#fff" stroke="#e07b18" stroke-width="1.9"/><circle cx="1154" cy="667.3" r="3.3" fill="#fff" stroke="#e07b18" stroke-width="1.9"/><circle cx="1154" cy="774" r="3.3" fill="#fff" stroke="#e07b18" stroke-width="1.9"/><circle cx="1154" cy="834.7" r="3.3" fill="#fff" stroke="#e07b18" stroke-width="1.9"/><circle cx="1322" cy="941" r="3.6" fill="#fff" stroke="#22a84a" stroke-width="2"/><rect x="928.5" y="319.3" width="25.0" height="10.0" fill="#fff" stroke="#111" stroke-width="1.8"/><circle cx="933.3" cy="324.3" r="3" fill="#1b3a9c"/><circle cx="941" cy="324.3" r="3" fill="#e07b18"/><circle cx="948.8" cy="324.3" r="3" fill="#b45bb0"/><rect x="936.5" y="426" width="17.0" height="9.800000000000011" fill="#fff" stroke="#111" stroke-width="1.8"/><circle cx="941.5" cy="431" r="3" fill="#e07b18"/><circle cx="949.3" cy="431" r="3" fill="#22a84a"/><rect x="1020.3" y="509.7" width="17.200000000000045" height="9.800000000000011" fill="#fff" stroke="#111" stroke-width="1.8"/><circle cx="1025.5" cy="514.6" r="3" fill="#e07b18"/><circle cx="1033" cy="514.6" r="3" fill="#2ba3dc"/><rect x="1134" y="617" width="10.400000000000091" height="17.700000000000045" fill="#fff" stroke="#111" stroke-width="1.8"/><circle cx="1139.2" cy="621.5" r="3" fill="#c8963a"/><circle cx="1139.2" cy="630" r="3" fill="#e07b18"/><rect x="1149.5" y="708" width="10.099999999999909" height="17" fill="#fff" stroke="#111" stroke-width="1.8"/><circle cx="1154.5" cy="712.4" r="3" fill="#6aa39a"/><circle cx="1154.5" cy="720.6" r="3" fill="#e07b18"/><rect x="1149.5" y="868.6" width="10.099999999999909" height="23.600000000000023" fill="#fff" stroke="#111" stroke-width="1.8"/><circle cx="1154.5" cy="873.8" r="3" fill="#e07b18"/><circle cx="1154.5" cy="880.4" r="3" fill="#6f7a3a"/><circle cx="1154.5" cy="887" r="3" fill="#c8963a"/><rect x="1149.5" y="937" width="17.5" height="9.5" fill="#fff" stroke="#111" stroke-width="1.8"/><circle cx="1154.5" cy="941.7" r="3" fill="#e07b18"/><circle cx="1162" cy="941.7" r="3" fill="#22a84a"/><rect x="1241" y="937" width="9.599999999999909" height="17" fill="#fff" stroke="#111" stroke-width="1.8"/><circle cx="1245.8" cy="941.5" r="3" fill="#22a84a"/><circle cx="1245.8" cy="949.5" r="3" fill="#d62338"/><rect x="1385.6" y="937" width="10.0" height="17" fill="#fff" stroke="#111" stroke-width="1.8"/><circle cx="1390.6" cy="941.5" r="3" fill="#22a84a"/><circle cx="1390.6" cy="949.5" r="3" fill="#b09a2a"/><path d="M827,203 L815.8,192 A15.6,15.6 0 1 1 838.2,192 Z" fill="#0a0ae6"/><path d="M1390.4,932.7 L1379,922 A15.9,15.9 0 1 1 1401.8,922 Z" fill="#1ea84d" stroke="#14843a" stroke-width="1"/></svg><div class="t" style="top:176.67px;font-size:7px;color:#fff;letter-spacing:-0.3px;left:820.31px;transform:scaleX(0.897);transform-origin:50% 0;">ARV</div>
<div class="t" style="top:908.57px;font-size:7px;color:#fff;letter-spacing:-0.3px;left:1383.85px;transform:scaleX(0.915);transform-origin:50% 0;">DPT</div>
<div class="t" style="top:197.03px;font-size:10px;color:#111;left:831.90px;transform:scaleX(0.804);transform-origin:0 0;">Dongnimmun</div>
<div class="t" style="top:235.03px;font-size:10px;color:#111;left:869.90px;transform:scaleX(0.781);transform-origin:0 0;">Gyeongbokgung</div>
<div class="t" style="top:266.14px;font-size:10px;color:#111;left:900.50px;transform:scaleX(0.793);transform-origin:0 0;">Anguk</div>
<div class="t" style="top:306.14px;font-size:10px;color:#111;font-weight:bold;left:944.40px;transform:scaleX(0.697);transform-origin:0 0;">Jongno 3(sam)-ga</div>
<div class="t" style="top:412.04px;font-size:10px;color:#111;font-weight:bold;left:952.50px;transform:scaleX(0.663);transform-origin:0 0;">Euljiro 3(sam)-ga</div>
<div class="t" style="top:495.84px;font-size:10px;color:#111;font-weight:bold;left:1036.00px;transform:scaleX(0.741);transform-origin:0 0;">Chungmuro</div>
<div class="t" style="top:577.03px;font-size:10px;color:#111;left:1024.75px;transform:scaleX(0.763);transform-origin:0 0;">Dongguk Univ.</div>
<div class="t" style="top:610.03px;font-size:10px;color:#111;font-weight:bold;left:1150.40px;transform:scaleX(0.660);transform-origin:0 0;">Yaksu</div>
<div class="t" style="top:663.74px;font-size:10px;color:#111;left:1162.80px;transform:scaleX(0.811);transform-origin:0 0;">Geumho</div>
<div class="t" style="top:709.53px;font-size:10px;color:#111;font-weight:bold;left:1168.60px;transform:scaleX(0.692);transform-origin:0 0;">Oksu</div>
<div class="t" style="top:770.83px;font-size:10px;color:#111;left:1162.70px;transform:scaleX(0.797);transform-origin:0 0;">Apgujeong</div>
<div class="t" style="top:800.53px;font-size:10px;color:#111;font-weight:bold;left:1124.60px;transform:scaleX(0.622);transform-origin:0 0;">Sinsa</div>
<div class="t" style="top:831.83px;font-size:10px;color:#111;left:1162.70px;transform:scaleX(0.787);transform-origin:0 0;">Jamwon</div>
<div class="t" style="top:902.74px;font-size:10px;color:#111;font-weight:bold;left:1165.50px;transform:scaleX(0.627);transform-origin:0 0;">Express Bus</div>
<div class="t" style="top:916.53px;font-size:10px;color:#111;font-weight:bold;left:1165.50px;transform:scaleX(0.672);transform-origin:0 0;">Terminal</div>
<div class="t" style="top:920.03px;font-size:10px;color:#111;font-weight:bold;left:1229.00px;transform:scaleX(0.754);transform-origin:0 0;">Gangnam</div>
<div class="t" style="top:925.93px;font-size:10px;color:#111;left:1307.40px;transform:scaleX(0.755);transform-origin:0 0;">Yeoksam</div>
<div class="t" style="top:923.13px;font-size:10px;color:#111;font-weight:bold;left:1348.60px;transform:scaleX(0.657);transform-origin:0 0;">Seolleung</div>
<div class="t" style="top:895.83px;font-size:10px;color:#111;font-weight:bold;left:1093.42px;transform:scaleX(0.663);transform-origin:100% 0;">Seoul Nat'l</div>
<div class="t" style="top:909.33px;font-size:10px;color:#111;font-weight:bold;left:1108.76px;transform:scaleX(0.723);transform-origin:100% 0;">Univ. of</div>
<div class="t" style="top:923.13px;font-size:10px;color:#111;font-weight:bold;left:1096.36px;transform:scaleX(0.683);transform-origin:100% 0;">Education</div>
<div class="a" style="left:0;top:109px;width:256px;height:931px;background:#3b3f50"></div><div class="box" style="left:1px;top:114px;width:251px;height:64px"></div><div class="box" style="left:1px;top:183px;width:251px;height:64px"></div><div class="t" style="top:128.16px;font-size:16px;color:#4db1e9;left:42.30px;transform:scaleX(1.004);transform-origin:0 0;">Station Search</div>
<div class="t" style="top:153.30px;font-size:15px;color:#ffffff;left:42.30px;transform:scaleX(1.005);transform-origin:0 0;">with name</div>
<div class="t" style="top:197.46px;font-size:16px;color:#4db1e9;left:42.30px;transform:scaleX(0.988);transform-origin:0 0;">Route Search</div>
<div class="t" style="top:221.90px;font-size:15px;color:#ffffff;left:42.30px;transform:scaleX(0.988);transform-origin:0 0;">for your way</div>
<svg class="a" style="left:160px;top:122px" width="50" height="50" viewBox="160 122 50 50">
<circle cx="181.6" cy="143.7" r="11.7" fill="none" stroke="#fff" stroke-width="5.6"/>
<line x1="190.5" y1="153" x2="199.8" y2="162.3" stroke="#fff" stroke-width="5.6" stroke-linecap="round"/></svg><svg class="a" style="left:160px;top:190px" width="50" height="52" viewBox="160 190 50 52">
<path d="M169,226 V207 C169,199 175,196 185,195.6 C195,196 201,199 201,207 V226 Z" fill="#fff"/>
<path d="M172.5,213.5 V205 C172.5,201.5 175,200.2 183.2,200 V213.5 Z" fill="#3b3f50"/>
<path d="M185.6,213.5 V200 C195,200.2 197.8,201.5 197.8,205 V213.5 Z" fill="#3b3f50"/>
<circle cx="191.2" cy="205.5" r="1.6" fill="#fff"/>
<rect x="188.3" y="207.5" width="6" height="6.5" fill="#fff"/>
<circle cx="176.2" cy="220" r="2.4" fill="#3b3f50"/><circle cx="193.8" cy="220" r="2.4" fill="#3b3f50"/>
<path d="M178,226 L170.5,236.5 M192,226 L199.5,236.5 M175,228.3 H195 M172.5,232 H197.5" stroke="#fff" stroke-width="2" fill="none" stroke-linecap="round"/>
</svg><div class="a" style="left:0;top:251px;width:256px;height:43px;background:#0b0d1c"></div><div class="a" style="left:0;top:253px;width:83px;height:38px;background:#1b9df0"></div><div class="a" style="left:84px;top:253px;width:85px;height:38px;background:#3b3f50"></div><div class="a" style="left:170px;top:253px;width:86px;height:38px;background:#3b3f50"></div><div class="t" style="top:264.60px;font-size:13px;color:#fff;font-weight:bold;left:17.23px;transform:scaleX(0.826);transform-origin:50% 0;">Fastest</div>
<div class="t" style="top:264.60px;font-size:13px;color:#fff;font-weight:bold;left:100.03px;transform:scaleX(0.857);transform-origin:50% 0;">Shortest</div>
<div class="t" style="top:264.60px;font-size:13px;color:#fff;font-weight:bold;left:184.47px;transform:scaleX(0.946);transform-origin:50% 0;">Minimum</div>
<div class="a" style="left:3px;top:298px;width:246px;height:116px;background:linear-gradient(#5c6071,#676a78);border:1px solid #e8e8ee"></div><div class="inp" style="top:311px"></div><div class="inp" style="top:341px"></div><div class="inp" style="top:371px"></div><div class="t" style="top:317.00px;font-size:13px;color:#f2f2f2;left:24.00px;transform:scaleX(0.887);transform-origin:0 0;">DPT.</div>
<div class="t" style="top:347.00px;font-size:13px;color:#f2f2f2;left:24.00px;transform:scaleX(0.943);transform-origin:0 0;">Via</div>
<div class="t" style="top:377.00px;font-size:13px;color:#f2f2f2;left:24.00px;transform:scaleX(0.899);transform-origin:0 0;">ARV.</div>
<div class="t" style="top:318.70px;font-size:13px;color:#222;left:70.00px;transform:scaleX(0.934);transform-origin:0 0;">Seolleung</div>
<div class="t" style="top:378.70px;font-size:13px;color:#222;left:70.00px;transform:scaleX(0.944);transform-origin:0 0;">Dongnimmun</div>
<div class="a" style="left:3px;top:421px;width:118px;height:35px;border:1px solid #e8e8ee;border-bottom:none"></div><div class="a" style="left:131px;top:421px;width:118px;height:35px;border:1px solid #e8e8ee;border-bottom:none"></div><svg class="a" style="left:26px;top:428px" width="22" height="22" viewBox="0 0 22 22">
<circle cx="9" cy="9" r="6" fill="none" stroke="#fff" stroke-width="2.6"/><line x1="13.3" y1="13.3" x2="18" y2="18" stroke="#fff" stroke-width="2.8" stroke-linecap="round"/></svg><div class="t" style="top:432.50px;font-size:13px;color:#fff;font-weight:bold;left:57.00px;transform:scaleX(0.908);transform-origin:0 0;">Submit</div>
<svg class="a" style="left:154px;top:428px" width="22" height="20" viewBox="0 0 22 20">
<path d="M3.5,9 A7.5,7.5 0 0 1 16.5,4.5" fill="none" stroke="#fff" stroke-width="2.8"/><path d="M19.5,1 L19.5,8 L12.5,8 Z" fill="#fff"/>
<path d="M18.5,11 A7.5,7.5 0 0 1 5.5,15.5" fill="none" stroke="#fff" stroke-width="2.8"/><path d="M2.5,19 L2.5,12 L9.5,12 Z" fill="#fff"/></svg><div class="t" style="top:432.50px;font-size:13px;color:#fff;font-weight:bold;left:184.00px;transform:scaleX(0.867);transform-origin:0 0;">Refresh</div>
<div class="a" style="left:3px;top:449px;width:246px;height:591px;background:#3b3f50;border-left:1px solid #e8e8ee;border-top:1px solid #e8e8ee"></div><div class="a" style="left:233px;top:450px;width:15px;height:590px;background:#f3f3f6"></div><div class="a" style="left:237px;top:544px;width:8px;height:500px;background:#c1c1c1;border-radius:4px"></div><div class="t" style="top:449.00px;font-size:13px;color:#fff;left:78.87px;transform:scaleX(0.946);transform-origin:50% 0;">for Teenagers</div>
<div class="a" style="left:4px;top:456px;width:229px;height:1px;background:#e8e8ee"></div><div class="t" style="top:465.70px;font-size:13px;color:#fff;left:52.16px;transform:scaleX(0.949);transform-origin:50% 0;"><span style="color:#4ba9e2">800</span> KRW | <span style="color:#4ba9e2">1,450</span> KRW</div>
<div class="t" style="top:487.30px;font-size:13px;color:#fff;left:96.36px;transform:scaleX(0.948);transform-origin:50% 0;">for Kids</div>
<div class="t" style="top:503.20px;font-size:13px;color:#fff;left:57.98px;transform:scaleX(0.944);transform-origin:50% 0;"><span style="color:#4ba9e2">500</span> KRW | <span style="color:#4ba9e2">550</span> KRW</div>
<div class="t" style="top:525.60px;font-size:13px;color:#fff;left:46.97px;transform:scaleX(0.926);transform-origin:50% 0;">Commuter Subway Pass</div>
<div class="t" style="top:542.60px;font-size:13px;color:#4ba9e2;left:83.57px;transform:scaleX(0.959);transform-origin:50% 0;">55,000KRW</div>
<div class="t" style="top:558.60px;font-size:13px;color:#fff;left:68.65px;transform:scaleX(0.913);transform-origin:50% 0;">(Seoul-exclusive)</div>
<div class="a" style="left:19px;top:585px;width:199px;height:68px;border:1.5px solid #fff"></div><div class="a" style="left:19px;top:585px;width:199px;height:34px;background:#fff"></div><div class="a" style="left:117.5px;top:618px;width:1.5px;height:34px;background:#fff"></div><div class="t" style="top:595.50px;font-size:13px;color:#111;font-weight:bold;left:38.29px;transform:scaleX(0.895);transform-origin:50% 0;">Departure</div>
<div class="t" style="top:595.50px;font-size:13px;color:#111;font-weight:bold;left:147.40px;transform:scaleX(0.849);transform-origin:50% 0;">Arrival</div>
<div class="t" style="top:628.60px;font-size:13px;color:#4ba9e2;left:53.03px;transform:scaleX(0.952);transform-origin:50% 0;">10:44</div>
<div class="t" style="top:628.60px;font-size:13px;color:#4ba9e2;left:152.21px;transform:scaleX(1.007);transform-origin:50% 0;">11:19</div>
<div class="a" style="left:19px;top:668px;width:199px;height:0;border-top:1px dotted #c8c9d0"></div><div class="t" style="top:684.60px;font-size:13px;color:#fff;left:23.90px;transform:scaleX(0.927);transform-origin:0 0;">Result based on <b style="color:#4ba9e2">10:39</b> <b>/ Weekdays</b></div>
<div class="a" style="left:62px;top:713px;width:113px;height:26px;background:#cfd0d3;border-radius:13px"></div><div class="t" style="top:719.30px;font-size:13px;color:#555;left:80.04px;transform:scaleX(0.931);transform-origin:50% 0;">Change Time</div>
<div class="a" style="left:33px;top:788px;width:3px;height:60px;background:#1ea64b"></div><div class="a" style="left:33px;top:876px;width:3px;height:57px;background:repeating-linear-gradient(#fff 0 4px,transparent 4px 6.5px)"></div><div class="a" style="left:33px;top:962px;width:3px;height:43px;background:#ef8b12"></div><div class="bd" style="top:759px;background:#1ea64b;font-size:13px">2</div><div class="bd" style="top:846px;background:#1ea64b;font-size:13px;letter-spacing:-1px">Off</div><div class="bd" style="top:933px;background:#ef8b12;font-size:13px">3</div><div class="bd" style="top:1004px;background:#ef8b12;font-size:13px;letter-spacing:-1px">Off</div><div class="t" style="top:767.70px;font-size:13px;color:#fff;font-weight:bold;left:59.20px;transform:scaleX(0.783);transform-origin:0 0;">Seolleung 2<svg class="kg" viewBox="0 0 100 100"><path d="M40,8H60 M18,22H82 M50,44m-13,0a13,11 0 1,0 26,0a13,11 0 1,0 -26,0 M50,58V72 M4,76H96" stroke-width="13"/></svg><svg class="kg" viewBox="0 0 100 100"><path d="M30,8L8,52 M30,26L52,50 M80,4V62 M58,30H80 M22,62V90H90" stroke-width="13"/></svg> <span style="color:#4ba9e2;font-weight:normal">(10:44)</span></div>
<div class="t" style="top:794.70px;font-size:13px;color:#9c9ea7;left:59.20px;transform:scaleX(0.818);transform-origin:0 0;">3 Stations</div>
<div class="t" style="top:810.80px;font-size:13px;color:#9c9ea7;left:59.20px;transform:scaleX(0.849);transform-origin:0 0;">No.1-1 doors for fast transfer.</div>
<div class="t" style="top:825.70px;font-size:13px;color:#9c9ea7;left:59.20px;transform:scaleX(0.829);transform-origin:0 0;">Avg. 7min(s) takes</div>
<div class="t" style="top:854.30px;font-size:13px;color:#fff;font-weight:bold;left:59.20px;transform:scaleX(0.744);transform-origin:0 0;">Seoul Nat'l Univ. of Education <svg class="kg" viewBox="0 0 100 100"><path d="M22,10H44 M6,26H62 M34,58m-17,0a17,15 0 1,0 34,0a17,15 0 1,0 -34,0 M80,4V96 M80,50H96" stroke-width="13"/></svg><svg class="kg" viewBox="0 0 100 100"><path d="M26,8H44 M6,26H62 M34,26L6,86 M34,44L62,84 M80,4V96 M80,50H96" stroke-width="13"/></svg></div>
<div class="t" style="top:897.50px;font-size:13px;color:#a3a5ad;left:70.00px;transform:scaleX(0.924);transform-origin:0 0;">Transfers (Avg. 1mins)</div>
<div class="t" style="top:933.60px;font-size:13px;color:#fff;font-weight:bold;left:59.20px;transform:scaleX(0.748);transform-origin:0 0;">Seoul Nat'l Univ. of Education 3<svg class="kg" viewBox="0 0 100 100"><path d="M40,8H60 M18,22H82 M50,44m-13,0a13,11 0 1,0 26,0a13,11 0 1,0 -26,0 M50,58V72 M4,76H96" stroke-width="13"/></svg></div>
<div class="t" style="top:948.20px;font-size:13px;color:#fff;font-weight:bold;left:59.20px;transform:scaleX(0.817);transform-origin:0 0;"><svg class="kg" viewBox="0 0 100 100"><path d="M30,8L8,52 M30,26L52,50 M80,4V62 M58,30H80 M22,62V90H90" stroke-width="13"/></svg> <span style="color:#4ba9e2;font-weight:normal">(10:52)</span></div>
<div class="t" style="top:968.20px;font-size:13px;color:#9c9ea7;left:59.20px;transform:scaleX(0.827);transform-origin:0 0;">14 Stations</div>
<div class="t" style="top:983.20px;font-size:13px;color:#9c9ea7;left:59.20px;transform:scaleX(0.832);transform-origin:0 0;">Avg. 27min(s) takes</div>
<div class="t" style="top:1012.80px;font-size:13px;color:#fff;font-weight:bold;left:59.20px;transform:scaleX(0.801);transform-origin:0 0;">Dongnimmun <svg class="kg" viewBox="0 0 100 100"><path d="M22,10H44 M6,26H62 M34,58m-17,0a17,15 0 1,0 34,0a17,15 0 1,0 -34,0 M80,4V96 M80,50H96" stroke-width="13"/></svg><svg class="kg" viewBox="0 0 100 100"><path d="M26,8H44 M6,26H62 M34,26L6,86 M34,44L62,84 M80,4V96 M80,50H96" stroke-width="13"/></svg></div>
<div class="a" style="left:276px;top:129px;width:464px;height:755px;background:#fff;border:2px solid #2c2f48;border-radius:4px;box-shadow:2px 3px 11px rgba(10,10,30,.55)"></div><div class="a" style="left:276px;top:129px;width:464px;height:47px;background:#3a3e50;border-radius:4px 4px 0 0"></div><div class="a" style="left:288.5px;top:144px;width:19.5px;height:19.5px;border-radius:50%;background:#1ea64b;color:#fff;font-size:10px;font-weight:bold;line-height:19.5px;text-align:center">2</div><div class="a" style="left:457px;top:144px;width:19.5px;height:19.5px;border-radius:50%;background:#ef8b12;color:#fff;font-size:10px;font-weight:bold;line-height:19.5px;text-align:center">3</div><div class="t" style="top:145.31px;font-size:17px;color:#fff;left:313.50px;transform:scaleX(0.850);transform-origin:0 0;">2<svg class="kg" viewBox="0 0 100 100"><path d="M40,8H60 M18,22H82 M50,44m-13,0a13,11 0 1,0 26,0a13,11 0 1,0 -26,0 M50,58V72 M4,76H96" stroke-width="11"/></svg><svg class="kg" viewBox="0 0 100 100"><path d="M30,8L8,52 M30,26L52,50 M80,4V62 M58,30H80 M22,62V90H90" stroke-width="11"/></svg> Seolleung</div>
<div class="t" style="top:145.31px;font-size:17px;color:#fff;left:482.60px;transform:scaleX(0.895);transform-origin:0 0;">3<svg class="kg" viewBox="0 0 100 100"><path d="M40,8H60 M18,22H82 M50,44m-13,0a13,11 0 1,0 26,0a13,11 0 1,0 -26,0 M50,58V72 M4,76H96" stroke-width="11"/></svg><svg class="kg" viewBox="0 0 100 100"><path d="M30,8L8,52 M30,26L52,50 M80,4V62 M58,30H80 M22,62V90H90" stroke-width="11"/></svg> Dongnimmun</div>
<svg class="a" style="left:425px;top:143px" width="24" height="22" viewBox="0 0 24 22">
<path d="M2,11 H18 M11,3.5 L18.5,11 L11,18.5" fill="none" stroke="#fff" stroke-width="4" stroke-linecap="round" stroke-linejoin="round"/></svg><svg class="a" style="left:706px;top:141px" width="24" height="24" viewBox="0 0 24 24">
<path d="M2.5,2.5 L21.5,21.5 M21.5,2.5 L2.5,21.5" stroke="#fff" stroke-width="1.9" stroke-linecap="round"/></svg><div class="a" style="left:295px;top:202.5px;width:5px;height:5px;border-radius:50%;background:#1ea64b"></div><div class="t" style="top:197.60px;font-size:13px;color:#111;font-weight:bold;left:307.30px;transform:scaleX(0.942);transform-origin:0 0;">Summary</div>
<div class="a" style="left:288px;top:218px;width:440px;height:1px;background:#bcbcbc"></div><div class="a" style="left:288px;top:227.5px;width:24.5px;height:24.5px;border-radius:50%;background:#1ea64b;color:#fff;font-size:13px;font-weight:bold;line-height:24.5px;text-align:center">2</div><div class="a" style="left:288px;top:277px;width:24.5px;height:24.5px;border-radius:50%;background:#ef8b12;color:#fff;font-size:13px;font-weight:bold;line-height:24.5px;text-align:center">3</div><div class="t" style="top:232.15px;font-size:14px;color:#111;font-weight:bold;letter-spacing:-0.3px;left:318.00px;transform:scaleX(0.873);transform-origin:0 0;">2<svg class="kg" viewBox="0 0 100 100"><path d="M40,8H60 M18,22H82 M50,44m-13,0a13,11 0 1,0 26,0a13,11 0 1,0 -26,0 M50,58V72 M4,76H96" stroke-width="14"/></svg><svg class="kg" viewBox="0 0 100 100"><path d="M30,8L8,52 M30,26L52,50 M80,4V62 M58,30H80 M22,62V90H90" stroke-width="14"/></svg> Seolleung</div>
<div class="t" style="top:282.45px;font-size:14px;color:#111;font-weight:bold;letter-spacing:-0.3px;left:318.00px;transform:scaleX(0.919);transform-origin:0 0;">3<svg class="kg" viewBox="0 0 100 100"><path d="M40,8H60 M18,22H82 M50,44m-13,0a13,11 0 1,0 26,0a13,11 0 1,0 -26,0 M50,58V72 M4,76H96" stroke-width="14"/></svg><svg class="kg" viewBox="0 0 100 100"><path d="M30,8L8,52 M30,26L52,50 M80,4V62 M58,30H80 M22,62V90H90" stroke-width="14"/></svg> Dongnimmun</div>
<div class="t" style="top:231.30px;font-size:13px;color:#555;left:459.20px;transform:scaleX(0.833);transform-origin:0 0;">10:44</div>
<div class="t" style="top:281.60px;font-size:13px;color:#555;left:459.20px;transform:scaleX(0.880);transform-origin:0 0;">11:19</div>
<div class="t" style="top:232.30px;font-size:13px;color:#444;font-weight:bold;left:514.27px;transform:scaleX(0.877);transform-origin:50% 0;">Lead Time</div>
<div class="t" style="top:256.60px;font-size:13px;color:#444;font-weight:bold;left:522.92px;transform:scaleX(0.850);transform-origin:50% 0;">Section</div>
<div class="t" style="top:280.50px;font-size:13px;color:#444;font-weight:bold;left:520.94px;transform:scaleX(0.852);transform-origin:50% 0;">Transfer</div>
<div class="t" style="top:329.50px;font-size:13px;color:#444;font-weight:bold;left:532.77px;transform:scaleX(0.823);transform-origin:50% 0;">Fare</div>
<div class="t" style="top:232.30px;font-size:13px;color:#555;left:607.40px;transform:scaleX(0.961);transform-origin:0 0;">35</div>
<div class="t" style="top:256.60px;font-size:13px;color:#555;left:607.40px;transform:scaleX(0.961);transform-origin:0 0;">17</div>
<div class="t" style="top:280.50px;font-size:13px;color:#555;left:607.40px;">1</div>
<div class="t" style="top:304.10px;font-size:13px;color:#555;left:607.40px;transform:scaleX(0.952);transform-origin:0 0;">1,350 KRW</div>
<div class="t" style="top:318.00px;font-size:13px;color:#555;left:607.40px;transform:scaleX(0.915);transform-origin:0 0;">(Transit Card)</div>
<div class="t" style="top:339.50px;font-size:13px;color:#555;left:607.40px;transform:scaleX(0.952);transform-origin:0 0;">1,450 KRW</div>
<div class="t" style="top:353.40px;font-size:13px;color:#555;left:607.40px;transform:scaleX(0.931);transform-origin:0 0;">(Ticket)</div>
<div class="a" style="left:295px;top:409px;width:5px;height:5px;border-radius:50%;background:#1ea64b"></div><div class="t" style="top:404.00px;font-size:13px;color:#111;font-weight:bold;left:307.30px;transform:scaleX(0.940);transform-origin:0 0;">Last Train Timetable</div>
<div class="a" style="left:288px;top:424px;width:440px;height:1px;background:#bcbcbc"></div><div class="a" style="left:288px;top:435px;width:440px;height:37px;background:#e1e1e1"></div><div class="a" style="left:420.5px;top:435px;width:1px;height:37px;background:#cfcfcf"></div><div class="a" style="left:420.5px;top:471.5px;width:88px;height:350px;background:#efefef;border-left:1px solid #e2e2e2;border-right:1px solid #e2e2e2"></div><div class="t" style="top:445.85px;font-size:14px;color:#111;font-weight:bold;left:330.27px;transform:scaleX(0.948);transform-origin:50% 0;">Station</div>
<div class="t" style="top:445.85px;font-size:14px;color:#111;font-weight:bold;left:558.08px;transform:scaleX(0.965);transform-origin:50% 0;">Time</div>
<div class="t" style="top:478.35px;font-size:14px;color:#222;left:431.85px;transform:scaleX(0.922);transform-origin:50% 0;">Weekdays</div>
<div class="t" style="top:477.80px;font-size:13px;color:#222;left:550.40px;transform:scaleX(0.983);transform-origin:50% 0;">00:18:00 (Hongik Univ.)</div>
<div class="a" style="left:509px;top:500.6px;width:219px;height:1px;background:#e6e6e6"></div><div class="t" style="top:507.50px;font-size:14px;color:#222;left:436.38px;transform:scaleX(0.922);transform-origin:50% 0;">Saturday</div>
<div class="t" style="top:506.95px;font-size:13px;color:#222;left:561.11px;transform:scaleX(0.975);transform-origin:50% 0;">23:29:30 (Sindorim)</div>
<div class="a" style="left:509px;top:529.8px;width:219px;height:1px;background:#e6e6e6"></div><div class="t" style="top:536.65px;font-size:14px;color:#222;left:440.66px;transform:scaleX(0.912);transform-origin:50% 0;">Sunday</div>
<div class="t" style="top:536.10px;font-size:13px;color:#222;left:561.11px;transform:scaleX(0.975);transform-origin:50% 0;">23:29:30 (Sindorim)</div>
<div class="a" style="left:288px;top:559.0px;width:440px;height:1px;background:#e6e6e6"></div><div class="t" style="top:506.52px;font-size:13px;color:#222;left:325.09px;transform:scaleX(0.934);transform-origin:50% 0;">Seolleung</div>
<div class="t" style="top:565.80px;font-size:14px;color:#222;left:431.85px;transform:scaleX(0.922);transform-origin:50% 0;">Weekdays</div>
<div class="a" style="left:509px;top:588.1px;width:219px;height:1px;background:#e6e6e6"></div><div class="t" style="top:594.95px;font-size:14px;color:#222;left:436.38px;transform:scaleX(0.922);transform-origin:50% 0;">Saturday</div>
<div class="a" style="left:509px;top:617.2px;width:219px;height:1px;background:#e6e6e6"></div><div class="t" style="top:624.10px;font-size:14px;color:#222;left:440.66px;transform:scaleX(0.912);transform-origin:50% 0;">Sunday</div>
<div class="a" style="left:288px;top:646.4px;width:440px;height:1px;background:#e6e6e6"></div><div class="t" style="top:653.25px;font-size:14px;color:#222;left:431.85px;transform:scaleX(0.922);transform-origin:50% 0;">Weekdays</div>
<div class="t" style="top:652.70px;font-size:13px;color:#222;left:548.10px;transform:scaleX(0.994);transform-origin:50% 0;">00:32:30 (Dongnimmun)</div>
<div class="a" style="left:509px;top:675.5px;width:219px;height:1px;background:#e6e6e6"></div><div class="t" style="top:682.40px;font-size:14px;color:#222;left:436.38px;transform:scaleX(0.922);transform-origin:50% 0;">Saturday</div>
<div class="t" style="top:681.85px;font-size:13px;color:#222;left:548.10px;transform:scaleX(0.994);transform-origin:50% 0;">23:36:30 (Dongnimmun)</div>
<div class="a" style="left:509px;top:704.7px;width:219px;height:1px;background:#e6e6e6"></div><div class="t" style="top:711.55px;font-size:14px;color:#222;left:440.66px;transform:scaleX(0.912);transform-origin:50% 0;">Sunday</div>
<div class="t" style="top:711.00px;font-size:13px;color:#222;left:548.10px;transform:scaleX(0.994);transform-origin:50% 0;">23:36:30 (Dongnimmun)</div>
<div class="a" style="left:288px;top:733.8px;width:440px;height:1px;background:#e6e6e6"></div><div class="t" style="top:674.92px;font-size:13px;color:#222;left:298.48px;transform:scaleX(0.952);transform-origin:50% 0;">Seoul Nat`l Univ. of</div>
<div class="t" style="top:692.02px;font-size:13px;color:#222;left:325.09px;transform:scaleX(0.951);transform-origin:50% 0;">Education</div>
<div class="t" style="top:740.70px;font-size:14px;color:#222;left:431.85px;transform:scaleX(0.922);transform-origin:50% 0;">Weekdays</div>
<div class="t" style="top:740.15px;font-size:13px;color:#222;left:548.10px;transform:scaleX(0.994);transform-origin:50% 0;">01:00:00 (Dongnimmun)</div>
<div class="a" style="left:509px;top:763.0px;width:219px;height:1px;background:#e6e6e6"></div><div class="t" style="top:769.85px;font-size:14px;color:#222;left:436.38px;transform:scaleX(0.922);transform-origin:50% 0;">Saturday</div>
<div class="t" style="top:769.30px;font-size:13px;color:#222;left:548.10px;transform:scaleX(0.994);transform-origin:50% 0;">00:03:30 (Dongnimmun)</div>
<div class="a" style="left:509px;top:792.1px;width:219px;height:1px;background:#e6e6e6"></div><div class="t" style="top:799.00px;font-size:14px;color:#222;left:440.66px;transform:scaleX(0.912);transform-origin:50% 0;">Sunday</div>
<div class="t" style="top:798.45px;font-size:13px;color:#222;left:548.10px;transform:scaleX(0.994);transform-origin:50% 0;">00:03:30 (Dongnimmun)</div>
<div class="a" style="left:288px;top:821.3px;width:440px;height:1px;background:#e6e6e6"></div><div class="t" style="top:768.87px;font-size:13px;color:#222;left:315.34px;transform:scaleX(0.987);transform-origin:50% 0;">Dongnimmun</div>

</body></html>
